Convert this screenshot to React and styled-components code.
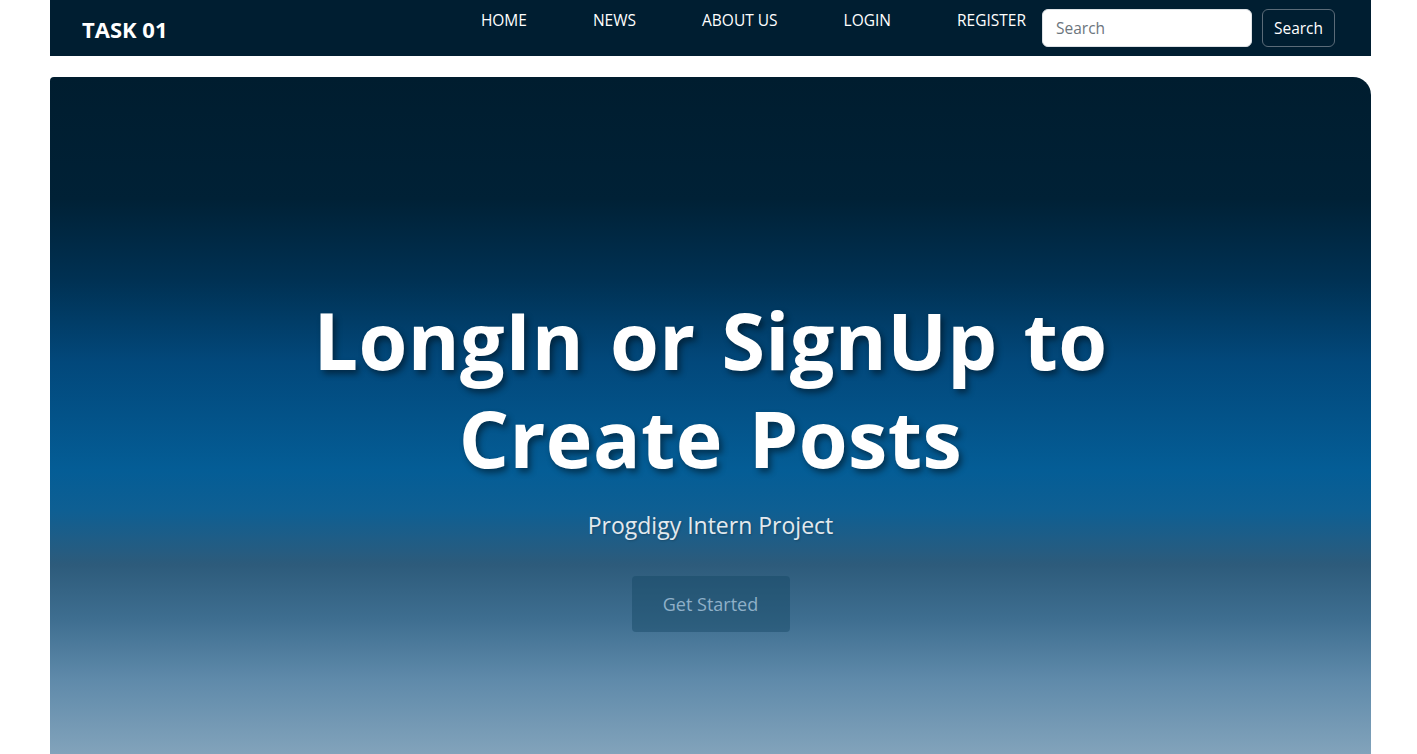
import styled, { createGlobalStyle } from "styled-components";

const GlobalStyle = createGlobalStyle`
  html, body {
    margin: 0;
    padding: 0;
    background: #ffffff;
    overflow: hidden;
  }
  body {
    font-family: "Open Sans", "Noto Sans", sans-serif;
  }
  * {
    box-sizing: border-box;
  }
`;

const links = ["HOME", "NEWS", "ABOUT US", "LOGIN", "REGISTER"];

const App = () => {
  return (
    <>
      <GlobalStyle />
      <Page>
        <Navbar>
          <Brand>TASK 01</Brand>
          <NavLinks>
            {links.map((l) => (
              <NavLink key={l}>{l}</NavLink>
            ))}
          </NavLinks>
          <SearchForm>
            <SearchInput placeholder="Search" />
            <SearchButton>Search</SearchButton>
          </SearchForm>
        </Navbar>
        <Hero>
          <Title>
            LongIn or SignUp to
            <br />
            Create Posts
          </Title>
          <Subtitle>Progdigy Intern Project</Subtitle>
          <StartButton>Get Started</StartButton>
        </Hero>
      </Page>
    </>
  );
};

export default App;

const Page = styled.div`
  width: 1417px;
  height: 754px;
  padding-left: 50px;
  display: flex;
  flex-direction: column;
  gap: 21px;
`;

const Navbar = styled.nav`
  width: 1321px;
  height: 56px;
  flex-shrink: 0;
  background: #001e31;
  display: flex;
  align-items: center;
  padding: 0 36px 0 32px;
`;

const Brand = styled.div`
  color: #ffffff;
  font-weight: 700;
  font-size: 22px;
  margin-top: 2px;
`;

const NavLinks = styled.ul`
  list-style: none;
  margin: 0 0 0 auto;
  padding: 0;
  display: flex;
  align-self: flex-start;
  padding-top: 10px;
`;

const NavLink = styled.li`
  color: #ffffff;
  font-size: 15.5px;
  padding: 0 33px 0 33px;
  line-height: 20px;

  &:last-child {
    padding-right: 16px;
  }
`;

const SearchForm = styled.form`
  display: flex;
  gap: 10px;
  margin: 0;
`;

const SearchInput = styled.input`
  width: 210px;
  height: 38px;
  border: 1px solid #dee2e6;
  border-radius: 6px;
  padding: 0 13px;
  font-family: inherit;
  font-size: 15.5px;
  color: #212529;
  outline: none;

  &::placeholder {
    color: #6c757d;
  }
`;

const SearchButton = styled.button`
  height: 38px;
  width: 73px;
  background: transparent;
  border: 1px solid #5b6b78;
  border-radius: 6px;
  color: #ffffff;
  font-family: inherit;
  font-size: 15.5px;
  padding: 0;
`;

const Hero = styled.section`
  width: 1321px;
  flex: 1;
  border-radius: 4px 18px 0 0;
  background: linear-gradient(
    to bottom,
    #001d2f 0%,
    #002136 18%,
    #003153 30%,
    #02487b 42%,
    #045d96 58%,
    #0e5f93 64%,
    #2d5b7b 72%,
    #3e6e90 80%,
    #5f8aaa 89%,
    #82a3bb 100%
  );
  display: flex;
  flex-direction: column;
  align-items: center;
  padding-top: 214px;
`;

const Title = styled.h1`
  margin: 0;
  color: #ffffff;
  font-weight: 700;
  font-size: 79px;
  line-height: 98px;
  text-align: center;
  letter-spacing: 0.4px;
  word-spacing: 5px;
  text-shadow: 3px 4px 6px rgba(0, 0, 0, 0.45);
`;

const Subtitle = styled.p`
  margin: 22px 0 0;
  color: #e3e9ee;
  font-size: 23px;
  text-shadow: 1px 1px 2px rgba(0, 0, 0, 0.2);
`;

const StartButton = styled.button`
  margin-top: 35px;
  width: 158px;
  height: 56px;
  border: none;
  border-radius: 4px;
  background: rgba(20, 70, 100, 0.45);
  color: #8fb0c8;
  font-family: inherit;
  font-size: 18px;
`;
